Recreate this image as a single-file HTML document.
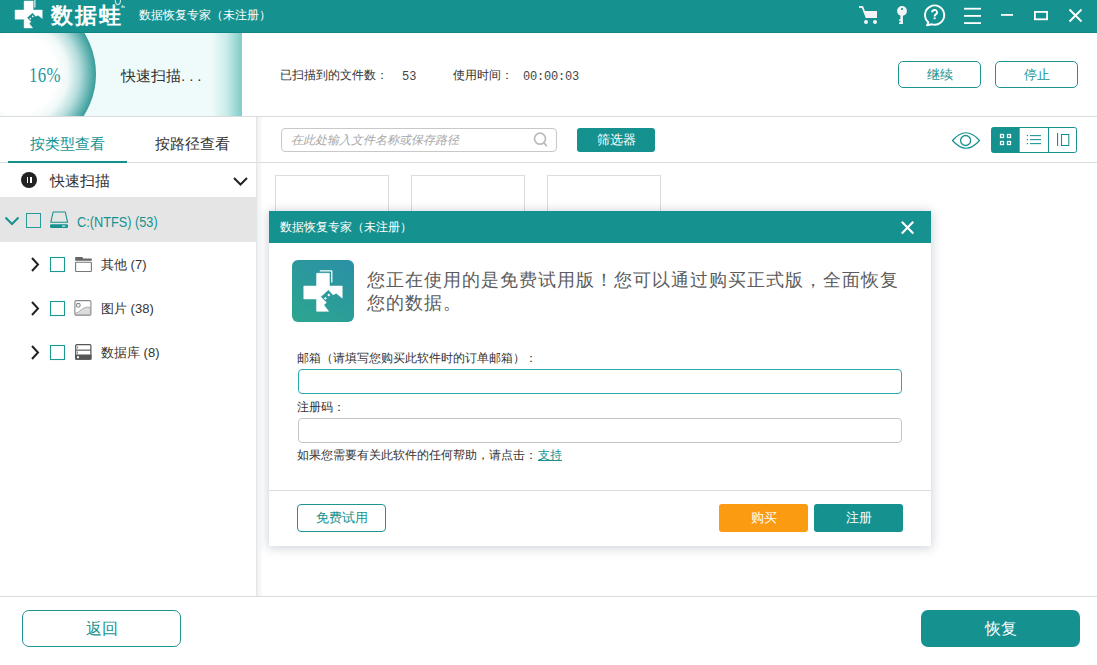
<!DOCTYPE html>
<html><head><meta charset="utf-8">
<style>
*{box-sizing:border-box;margin:0;padding:0}
html,body{width:1097px;height:665px;overflow:hidden;background:#fff;font-family:"Liberation Sans",sans-serif;color:#333}
.abs{position:absolute}
.t{position:absolute;white-space:nowrap;line-height:1}
#title{left:0;top:0;width:1097px;height:33px;background:#159290;border-bottom:1px solid #0f8683}
#prog{left:0;top:33px;width:242px;height:83px;background:linear-gradient(90deg,#effbfb 0,#effbfb 211px,#c8ebe9 227px,#8dd1cd 239px,#84cdc9 242px);overflow:hidden}
#circ{left:-60px;top:-37px;width:156px;height:156px;border-radius:50%;background:radial-gradient(circle closest-side at 50% 50%,#fff 0,#fff 50%,#f0f8f8 64%,#b5dddc 79%,#6bb8b6 91%,#3c9e9c 99%,#399b99 100%)}
.btn-o{position:absolute;border:1px solid #1f9593;border-radius:5px;background:#fff;color:#159290;text-align:center}
.btn-f{position:absolute;border-radius:4px;background:#159290;color:#fff;text-align:center}
.hline{position:absolute;height:1px;background:#dcdcdc}
.cb{position:absolute;width:15px;height:15px;border:1px solid #2a9a98;background:#fff}
</style></head><body>

<!-- title bar -->
<div id="title" class="abs"></div>
<svg class="abs" style="left:0;top:0" width="140" height="33" viewBox="0 0 140 33">
 <g transform="translate(15 1) scale(0.71) translate(-303.8 -273.3)">
  <path fill="#fff" stroke="#fff" stroke-width="0.6" stroke-linejoin="round" d="M316.6 273.3H329.4V286.1H342.2V298.1L336.3 293.2 333 294.8 328.5 289.7 320.6 296.8 326.4 302.5 323.8 305 328.6 311.3H316.6V298.9H303.8V286.1H316.6Z"/>
  <path d="M331.8 266V282.5" fill="none" stroke="#fff" stroke-width="1.5"/>
  <rect x="327.8" y="293.9" width="2.1" height="2.1" fill="#fff" transform="rotate(45 328.8 294.9)"/>
  <rect x="324.4" y="297.3" width="2.1" height="2.1" fill="#fff" transform="rotate(45 325.4 298.3)"/>
 </g>
</svg>
<div class="t" style="left:51px;top:5px;font-size:22px;font-weight:bold;color:#fff;letter-spacing:2px">数据蛙</div>
<svg class="abs" style="left:110px;top:0" width="20" height="12" viewBox="110 0 20 12"><path d="M115.3 0Q115 4 117.9 4.8Q120.7 4 120.5 0" fill="none" stroke="#bfe3e2" stroke-width="1.1"/><path d="M121 7.5L122.3 4.8 123.6 6.5 124.6 5.8 124.9 7.8Z" fill="#bfe3e2"/></svg>
<div class="t" style="left:139px;top:9px;font-size:12px;color:#fff">数据恢复专家（未注册）</div>


<!-- title icons -->
<svg class="abs" style="left:855px;top:0" width="242" height="33" viewBox="855 0 242 33">
  <g fill="#f4f4f8">
    <rect x="859" y="6" width="3.8" height="1.9"/>
    <path d="M861.2 6.2L863 6L867.6 18H865.8Z"/>
    <path d="M864.3 11H877V18H866.6Z"/>
    <circle cx="866" cy="22" r="2"/><circle cx="875" cy="22" r="2"/>
    <circle cx="902" cy="11" r="4.9"/>
    <rect x="900.4" y="12" width="2.5" height="12"/>
    <rect x="899" y="19.3" width="2" height="1.5"/>
    <rect x="899" y="22.3" width="3.9" height="1.7"/>
  </g>
  <circle cx="902" cy="9" r="1.1" fill="#159290"/>
  <path d="M928.3 22.3A9.6 9.6 0 1 1 932 24.3L927 25.3Z" fill="none" stroke="#fff" stroke-width="1.9" stroke-linejoin="round"/>
  <path d="M932.2 12.4A2.4 2.4 0 1 1 935.8 14.4C934.8 15 934.6 15.4 934.6 16.5" fill="none" stroke="#fff" stroke-width="1.9"/>
  <rect x="933.6" y="17.4" width="2" height="1.8" fill="#fff"/>
  <g fill="#fff">
    <rect x="964" y="7.8" width="17" height="1.8"/>
    <rect x="964" y="15" width="17" height="1.8"/>
    <rect x="964" y="22.2" width="17" height="1.8"/>
    <rect x="1001" y="14" width="12" height="1.8"/>
  </g>
  <rect x="1034.9" y="11.9" width="12.2" height="7.4" fill="none" stroke="#fff" stroke-width="1.8"/>
  <path d="M1069.5 9.5L1081.5 21.5M1081.5 9.5L1069.5 21.5" stroke="#fff" stroke-width="1.9"/>
</svg>

<!-- header -->
<div id="prog" class="abs"><div id="circ" class="abs"></div></div>
<div class="t" style="left:29px;top:65px;font-size:21px;color:#1a98a0;font-family:'Liberation Serif',serif;transform:scaleX(0.8);transform-origin:0 0;letter-spacing:0.5px">16%</div>
<div class="t" style="left:121px;top:68px;font-size:15px;color:#333">快速扫描<span style="letter-spacing:4px">...</span></div>
<div class="t" style="left:280px;top:69px;font-size:12px;color:#333">已扫描到的文件数：</div>
<div class="t" style="left:402px;top:71px;font-size:12px;color:#444;font-family:'Liberation Mono',monospace">53</div>
<div class="t" style="left:453px;top:69px;font-size:12px;color:#333">使用时间：</div>
<div class="t" style="left:523px;top:71px;font-size:12px;color:#444;font-family:'Liberation Mono',monospace;letter-spacing:-0.2px">00:00:03</div>
<div class="btn-o" style="left:898px;top:61px;width:83px;height:27px;font-size:13px;line-height:25px">继续</div>
<div class="btn-o" style="left:995px;top:61px;width:83px;height:27px;font-size:13px;line-height:25px">停止</div>
<div class="hline" style="left:0;top:116px;width:1097px"></div>

<!-- left panel -->
<div class="abs" style="left:256px;top:117px;width:1px;height:479px;background:#e3e6e8"></div>
<div class="abs" style="left:257px;top:117px;width:6px;height:479px;background:linear-gradient(90deg,#eef0f2,#fff)"></div>
<div class="t" style="left:30px;top:136px;font-size:15px;color:#159290">按类型查看</div>
<div class="t" style="left:155px;top:136px;font-size:15px;color:#333">按路径查看</div>
<div class="hline" style="left:0;top:162px;width:256px"></div>
<div class="abs" style="left:8px;top:161px;width:119px;height:2px;background:#159290"></div>
<div class="abs" style="left:21px;top:172px;width:16px;height:16px;border-radius:50%;background:#222"></div>
<div class="abs" style="left:26.5px;top:177px;width:1.5px;height:6px;background:#fff"></div>
<div class="abs" style="left:30px;top:177px;width:1.5px;height:6px;background:#fff"></div>
<div class="t" style="left:50px;top:173px;font-size:15px;color:#333">快速扫描</div>
<svg class="abs" style="left:232px;top:176px" width="17" height="11"><path d="M2 2L8.5 8.5 15 2" fill="none" stroke="#222" stroke-width="2"/></svg>

<div class="abs" style="left:0;top:197px;width:256px;height:45px;background:#e5e5e5"></div>


<svg class="abs" style="left:0;top:197px" width="256" height="170" viewBox="0 197 256 170">
  <path d="M5.5 217.5L12 224 18.5 217.5" fill="none" stroke="#159290" stroke-width="2"/>
  <rect x="26.5" y="213.5" width="14" height="14" fill="none" stroke="#2a9a98" stroke-width="1"/>
  <path d="M50.8 222.3L53.1 212H65.3L67.6 222.3Z" fill="none" stroke="#159290" stroke-width="1.1" stroke-linejoin="round"/>
  <rect x="50" y="224.2" width="18" height="3.8" rx="1.2" fill="#159290"/>
  <rect x="62" y="225.6" width="3.5" height="1" fill="#fff"/>
  <g fill="none" stroke="#222" stroke-width="2">
    <path d="M32 258L38 264.5 32 271"/>
    <path d="M32 302L38 308.5 32 315"/>
    <path d="M32 346L38 352.5 32 359"/>
  </g>
  <g fill="none" stroke="#1c9794" stroke-width="1.1">
    <rect x="50.5" y="257.5" width="14" height="14"/>
    <rect x="50.5" y="301.5" width="14" height="14"/>
    <rect x="50.5" y="345.5" width="14" height="14"/>
  </g>
  <path d="M75.2 257.5Q75.2 257 75.7 257H82.5L83 258.6H91.3Q91.8 258.6 91.8 259.5V260.8H75.2Z" fill="#666"/>
  <rect x="75.6" y="262.2" width="15.8" height="9.3" rx="0.6" fill="none" stroke="#777" stroke-width="1.1"/>
  <rect x="74.9" y="300.6" width="16" height="14.6" rx="1.3" fill="#fff" stroke="#888" stroke-width="1.1"/>
  <path d="M75.4 313.3C79 312.8 82.5 307.6 86.5 307.2C88.5 307 90.4 307.6 90.4 307.6V314.7H75.4Z" fill="#dcdcdc" stroke="#999" stroke-width="0.8"/>
  <circle cx="78.3" cy="305.3" r="1.9" fill="#fff" stroke="#888" stroke-width="1.1"/>
  <rect x="75.7" y="344.6" width="15.2" height="14.6" rx="1" fill="#fff" stroke="#555" stroke-width="1.2"/>
  <rect x="75.7" y="349.6" width="15.2" height="1.1" fill="#555"/>
  <rect x="75.1" y="354.4" width="16.4" height="5.4" rx="1" fill="#555"/>
  <rect x="76.9" y="346.4" width="1" height="2" fill="#777"/>
  <rect x="76.9" y="351.6" width="1" height="2" fill="#777"/>
  <rect x="77" y="356.2" width="2" height="2" fill="#fff"/>
</svg>
<div class="t" style="left:77px;top:214.5px;font-size:14px;color:#159290;transform:scaleX(.91);transform-origin:0 0">C:(NTFS) (53)</div>
<div class="t" style="left:101px;top:258px;font-size:13px;color:#333">其他 (7)</div>
<div class="t" style="left:101px;top:302px;font-size:13px;color:#333">图片 (38)</div>
<div class="t" style="left:101px;top:346px;font-size:13px;color:#333">数据库 (8)</div>

<!-- content -->
<div class="abs" style="left:281px;top:128px;width:276px;height:24px;border:1px solid #c8c8c8;border-radius:4px"></div>
<div class="t" style="left:291px;top:134px;font-size:12px;color:#a8a8a8;font-style:italic">在此处输入文件名称或保存路径</div>
<div class="btn-f" style="left:577px;top:128px;width:78px;height:24px;font-size:13px;line-height:24px;border-radius:3px">筛选器</div>

<svg class="abs" style="left:940px;top:120px" width="157" height="45" viewBox="940 120 157 45">
  <path d="M952.5 140.5Q966 125 979.5 140.5Q966 156 952.5 140.5Z" fill="none" stroke="#159290" stroke-width="1.2"/>
  <circle cx="965.6" cy="140.5" r="5" fill="none" stroke="#159290" stroke-width="1.3"/>
  <rect x="991.5" y="127.5" width="85" height="25" rx="2" fill="#fff" stroke="#159290" stroke-width="1"/>
  <path d="M993.5 127.5H1019.7V152.5H993.5A2 2 0 0 1 991.5 150.5V129.5A2 2 0 0 1 993.5 127.5Z" fill="#159290"/>
  <rect x="1048" y="127.5" width="1" height="25" fill="#159290"/>
  <g fill="none" stroke="#fff" stroke-width="1.25">
    <rect x="1000.5" y="134.5" width="3" height="3"/>
    <rect x="1007.5" y="134.5" width="3" height="3"/>
    <rect x="1000.5" y="141.5" width="3" height="3"/>
    <rect x="1007.5" y="141.5" width="3" height="3"/>
  </g>
  <g fill="#159290">
    <rect x="1026.8" y="135" width="1.2" height="1.2"/>
    <rect x="1026.8" y="139" width="1.2" height="1.2"/>
    <rect x="1026.8" y="143" width="1.2" height="1.2"/>
    <rect x="1030" y="135.1" width="11" height="1.05"/>
    <rect x="1030" y="139.1" width="11" height="1.05"/>
    <rect x="1030" y="143.1" width="11" height="1.05"/>
    <rect x="1057" y="133" width="1.1" height="13"/>
  </g>
  <rect x="1061.5" y="134.5" width="7.3" height="11" fill="none" stroke="#159290" stroke-width="1.05"/>
</svg>
<svg class="abs" style="left:530px;top:130px" width="22" height="22" viewBox="530 130 22 22">
  <circle cx="540" cy="138.7" r="5.5" fill="none" stroke="#bbb" stroke-width="1.7"/>
  <path d="M543.8 142.5L546.3 145.6" stroke="#bbb" stroke-width="1.8" stroke-linecap="round"/>
</svg>

<div class="hline" style="left:257px;top:162px;width:840px"></div>

<div class="abs" style="left:275px;top:175px;width:114px;height:60px;border:1px solid #dcdcdc;border-bottom:none"></div>
<div class="abs" style="left:411px;top:175px;width:114px;height:60px;border:1px solid #dcdcdc;border-bottom:none"></div>
<div class="abs" style="left:547px;top:175px;width:114px;height:60px;border:1px solid #dcdcdc;border-bottom:none"></div>

<!-- footer -->
<div class="hline" style="left:0;top:596px;width:1097px"></div>
<div class="btn-o" style="left:22px;top:610px;width:159px;height:37px;font-size:16px;line-height:35px;border-radius:7px">返回</div>
<div class="btn-f" style="left:921px;top:610px;width:159px;height:37px;font-size:16px;line-height:37px;border-radius:7px">恢复</div>

<!-- dialog -->
<div class="abs" style="left:269px;top:211px;width:662px;height:335px;background:#fff;box-shadow:0 1px 10px 1px rgba(30,50,85,.22)"></div>
<div class="abs" style="left:269px;top:211px;width:662px;height:32px;background:#159290"></div>
<div class="t" style="left:280px;top:221px;font-size:12px;color:#fff">数据恢复专家（未注册）</div>

<div class="abs" style="left:292px;top:260px;width:62px;height:62px;border-radius:6px;background:linear-gradient(30deg,#2ca68f,#2b8fa6)"></div>

<svg class="abs" style="left:900px;top:218px" width="16" height="18" viewBox="900 218 16 18">
  <path d="M901.8 221.8L913.3 233.6M913.3 221.8L901.8 233.6" stroke="#fff" stroke-width="2.1"/>
</svg>
<svg class="abs" style="left:292px;top:260px" width="62" height="62" viewBox="292 260 62 62">
  <path fill="#fff" stroke="#fff" stroke-width="0.6" stroke-linejoin="round" d="M316.6 273.3H329.4V286.1H342.2V298.1L336.3 293.2 333 294.8 328.5 289.7 320.6 296.8 326.4 302.5 323.8 305 328.6 311.3H316.6V298.9H303.8V286.1H316.6Z"/>
  <path d="M319.8 270.8H331.2A0.6 0.6 0 0 1 331.8 271.4V282.5" fill="none" stroke="#fff" stroke-width="1.3"/>
  <rect x="327.8" y="293.9" width="2.1" height="2.1" fill="#fff" transform="rotate(45 328.8 294.9)"/>
  <rect x="324.4" y="297.3" width="2.1" height="2.1" fill="#fff" transform="rotate(45 325.4 298.3)"/>
</svg>

<div class="t" style="left:367px;top:269px;font-size:18px;line-height:22.5px;letter-spacing:1px;color:#5c5c5c;font-family:'Liberation Serif',serif;white-space:normal;width:545px">您正在使用的是免费试用版！您可以通过购买正式版，全面恢复您的数据。</div>

<div class="t" style="left:297px;top:352px;font-size:12px;color:#333">邮箱（请填写您购买此软件时的订单邮箱）：</div>
<div class="abs" style="left:298px;top:369px;width:604px;height:25px;border:1.5px solid #2aaaa8;border-radius:4px"></div>
<div class="t" style="left:297px;top:401px;font-size:12px;color:#333">注册码：</div>
<div class="abs" style="left:298px;top:418px;width:604px;height:25px;border:1px solid #c4c4c4;border-radius:4px"></div>
<div class="t" style="left:297px;top:449px;font-size:12px;color:#333">如果您需要有关此软件的任何帮助，请点击：<span style="color:#159290;text-decoration:underline;margin-left:1px">支持</span></div>

<div class="hline" style="left:269px;top:490px;width:662px"></div>
<div class="btn-o" style="left:297px;top:504px;width:89px;height:28px;font-size:13px;line-height:26px;border-radius:4px">免费试用</div>
<div class="btn-f" style="left:719px;top:504px;width:89px;height:28px;font-size:13px;line-height:28px;border-radius:3px;background:#fa9b12">购买</div>
<div class="btn-f" style="left:814px;top:504px;width:89px;height:28px;font-size:13px;line-height:28px;border-radius:3px">注册</div>

</body></html>
